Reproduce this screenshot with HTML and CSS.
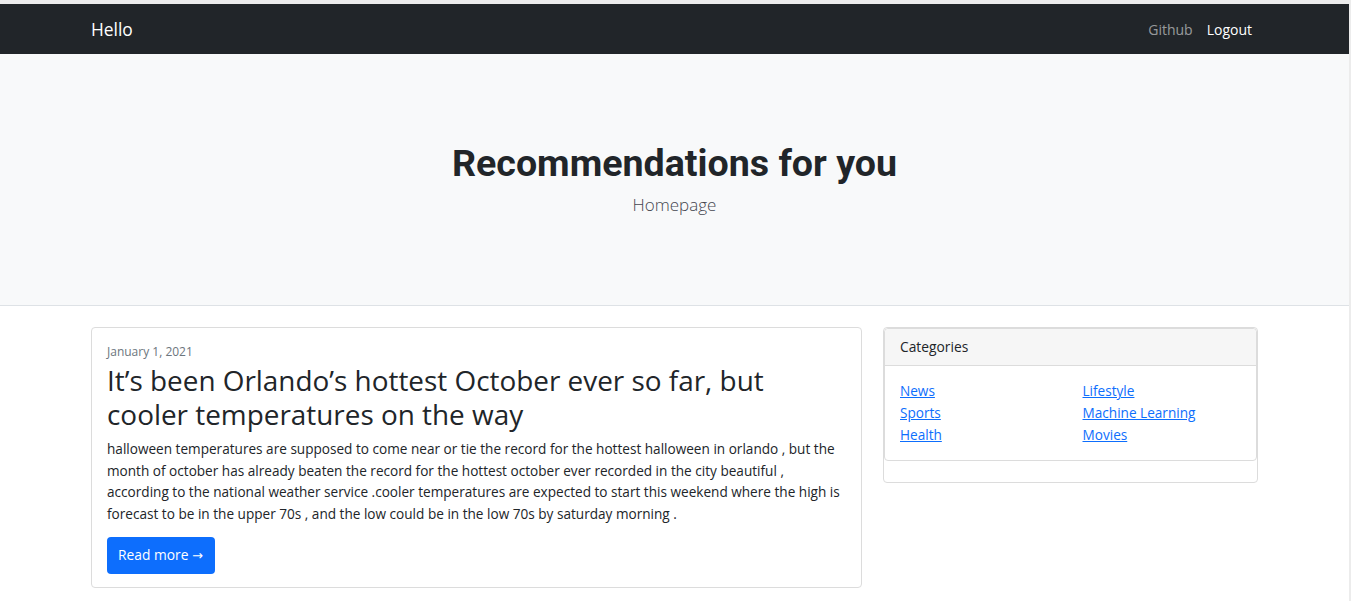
FILE: index.html
```html
<!DOCTYPE html>
<html lang="en">
<head>
<meta charset="utf-8">
<title>Hello</title>
<link rel="stylesheet" href="styles.css">
</head>
<body>
<div class="page">
  <nav class="navbar">
    <div class="container nav-inner">
      <a class="brand" href="#">Hello</a>
      <ul class="nav-links">
        <li><a class="nav-link" href="#">Github</a></li>
        <li><a class="nav-link active" href="#">Logout</a></li>
      </ul>
    </div>
  </nav>
  <header class="hero">
    <h1 class="hero-title">Recommendations for you</h1>
    <p class="lead">Homepage</p>
  </header>
  <main class="container">
    <div class="row">
      <div class="col-main">
        <article class="card">
          <div class="card-body">
            <div class="date">January 1, 2021</div>
            <h2 class="card-title">It’s been Orlando’s hottest October ever so far, but cooler temperatures on the way</h2>
            <p class="card-text">halloween temperatures are supposed to come near or tie the record for the hottest halloween in orlando , but the month of october has already beaten the record for the hottest october ever recorded in the city beautiful , according to the national weather service .cooler temperatures are expected to start this weekend where the high is forecast to be in the upper 70s , and the low could be in the low 70s by saturday morning .</p>
            <a class="btn" href="#">Read more <span class="arrow">→</span></a>
          </div>
        </article>
      </div>
      <aside class="col-side">
        <div class="card side-card">
          <div class="card inner-card">
            <div class="card-header">Categories</div>
            <div class="cat-body">
              <ul class="cat-list">
                <li><a href="#">News</a></li>
                <li><a href="#">Sports</a></li>
                <li><a href="#">Health</a></li>
              </ul>
              <ul class="cat-list">
                <li><a href="#">Lifestyle</a></li>
                <li><a href="#">Machine Learning</a></li>
                <li><a href="#">Movies</a></li>
              </ul>
            </div>
          </div>
        </div>
      </aside>
    </div>
  </main>
</div>
</body>
</html>
```
FILE: styles.css
```css
html { background: #ececec; }
body {
  margin: 0;
  font-family: "Open Sans", "Noto Sans", sans-serif;
  color: #212529;
}
.page {
  margin-top: 4px;
  margin-right: 2px;
  background: #fff;
  min-height: 597px;
}
.container {
  max-width: 1167px;
  padding: 0 12px;
  margin: 0 auto;
}
a { color: #0d6efd; }

/* navbar */
.navbar {
  background: #212529;
  height: 50px;
}
.nav-inner {
  height: 50px;
  display: flex;
  align-items: center;
  justify-content: space-between;
}
.brand {
  color: #fff;
  text-decoration: none;
  font-size: 17.4px;
  line-height: 24px;
}
.nav-links {
  list-style: none;
  margin: 0;
  padding: 0;
  display: flex;
  gap: 14px;
  margin-right: 6px;
}
.nav-link {
  color: rgba(255, 255, 255, 0.55);
  text-decoration: none;
  font-size: 14px;
  line-height: 20px;
}
.nav-link.active { color: #fff; }

/* hero */
.hero {
  background: #f8f9fa;
  border-bottom: 1px solid #dee2e6;
  padding: 85px 0 85px;
  text-align: center;
}
.hero-title {
  margin: 0;
  font-family: Roboto, "Open Sans", sans-serif;
  font-weight: 700;
  font-size: 37.6px;
  line-height: 48px;
  color: #212529;
}
.lead {
  margin: 3px 0 0;
  font-size: 17px;
  font-weight: 300;
  line-height: 30px;
  color: #45464f;
}

/* layout */
main.container { padding-top: 21px; }
.row {
  display: grid;
  grid-template-columns: 771px 375px;
  column-gap: 21px;
  align-items: start;
}
.card {
  border: 1px solid #dcdcdc;
  border-radius: 4px;
  background: #fff;
}
.card-body {
  padding: 16px 15px 13px;
}
.date {
  font-size: 12px;
  line-height: 15px;
  color: #6c757d;
}
.card-title {
  max-width: 700px;
  margin: 4px 0 0;
  font-size: 27.9px;
  font-weight: 500;
  line-height: 34px;
  color: #212529;
}
.card-text {
  margin: 7px 0 13px;
  font-size: 13.6px;
  line-height: 21.5px;
}
.btn {
  display: inline-block;
  background: #0d6efd;
  color: #fff;
  text-decoration: none;
  border-radius: 4px;
  font-size: 13.8px;
  line-height: 22px;
  padding: 7px 12px 7px 11px;
}
.arrow {
  font-family: "DejaVu Sans", sans-serif;
  font-size: 13px;
}

/* sidebar */
.side-card {
  padding-bottom: 21px;
}
.inner-card {
  border-radius: 4px;
}
.card-header {
  background: #f6f6f6;
  border-bottom: 1px solid #dcdcdc;
  padding: 8px 15px;
  font-size: 13.8px;
  line-height: 20px;
  border-radius: 4px 4px 0 0;
}
.cat-body {
  display: grid;
  grid-template-columns: 1fr 1fr;
  column-gap: 24px;
  padding: 14px 15px;
}
.cat-list {
  list-style: none;
  margin: 0;
  padding: 0;
  font-size: 13.6px;
  line-height: 22px;
}
```
